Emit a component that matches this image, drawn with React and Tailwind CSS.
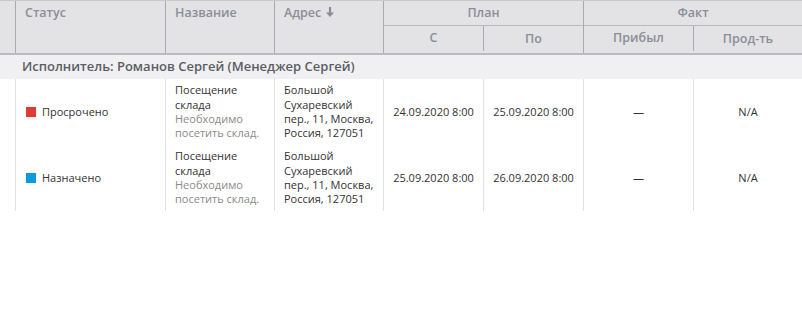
const rows = [
  {
    status: 'Просрочено',
    color: 'bg-[#e13b35]',
    from: '24.09.2020 8:00',
    to: '25.09.2020 8:00',
  },
  {
    status: 'Назначено',
    color: 'bg-[#0a9bd9]',
    from: '25.09.2020 8:00',
    to: '26.09.2020 8:00',
  },
];

function ArrowDown() {
  return (
    <svg width="10" height="12" viewBox="0 0 10 12" className="ml-1 mt-[2px]">
      <path d="M5 1v8" stroke="#8b8e96" strokeWidth="2.2" />
      <path d="M1 6.5 5 11l4-4.5z" fill="#8b8e96" />
    </svg>
  );
}

export default function App() {
  return (
    <div className="w-[802px] h-[333px] bg-white text-[11px] font-['Open_Sans','Noto_Sans',sans-serif]">
      {/* Шапка */}
      <div className="flex h-[55px] bg-[#e3e3e5] border-t border-[#c9c9cd] border-b-2 border-b-[#b9bbc0] text-[#8b8e97] text-[12.5px] font-semibold">
        <div className="w-[15px] shrink-0" />
        <div className="w-[150px] shrink-0 border-l border-[#a7abb3] pl-[9px] pt-[3px]">Статус</div>
        <div className="w-[109px] shrink-0 border-l border-[#a7abb3] pl-[9px] pt-[3px]">Название</div>
        <div className="w-[109px] shrink-0 border-l border-[#a7abb3] pl-[9px] pt-[3px] flex items-start">
          Адрес
          <ArrowDown />
        </div>
        <div className="w-[200px] shrink-0 border-l border-[#a7abb3] flex flex-col">
          <div className="h-[25px] flex items-center justify-center border-b border-[#b9bbc0]">План</div>
          <div className="flex flex-1">
            <div className="w-[100px] flex items-center justify-center border-r border-[#a7abb3] mb-[2px]">С</div>
            <div className="flex-1 flex items-center justify-center">По</div>
          </div>
        </div>
        <div className="flex-1 border-l border-[#a7abb3] flex flex-col">
          <div className="h-[25px] flex items-center justify-center border-b border-[#b9bbc0]">Факт</div>
          <div className="flex flex-1">
            <div className="w-[110px] flex items-center justify-center border-r border-[#a7abb3] mb-[2px]">Прибыл</div>
            <div className="flex-1 flex items-center justify-center">Прод-ть</div>
          </div>
        </div>
      </div>

      {/* Группа */}
      <div className="h-[24px] bg-[#f0f0f2] flex items-center pl-[22px] text-[13px] font-semibold text-[#5b5d63]">
        Исполнитель: Романов Сергей (Менеджер Сергей)
      </div>

      {/* Строки */}
      {rows.map((r) => (
        <div key={r.status} className="flex h-[66px] text-[#333]">
          <div className="w-[15px] shrink-0" />
          <div className="w-[150px] shrink-0 border-l border-[#e2e2e2] flex items-center pl-[10px]">
            <span className={`w-[10px] h-[10px] mr-[6px] ${r.color}`} />
            {r.status}
          </div>
          <div className="w-[109px] shrink-0 border-l border-[#e2e2e2] flex flex-col justify-center pl-[9px] leading-[14.3px]">
            <div>Посещение</div>
            <div>склада</div>
            <div className="text-[#8a8a8a]">Необходимо</div>
            <div className="text-[#8a8a8a]">посетить склад.</div>
          </div>
          <div className="w-[109px] shrink-0 border-l border-[#e2e2e2] flex flex-col justify-center pl-[9px] leading-[14.3px]">
            <div>Большой</div>
            <div>Сухаревский</div>
            <div>пер., 11, Москва,</div>
            <div>Россия, 127051</div>
          </div>
          <div className="w-[100px] shrink-0 border-l border-[#e2e2e2] flex items-center justify-center">{r.from}</div>
          <div className="w-[100px] shrink-0 border-l border-[#e2e2e2] flex items-center justify-center">{r.to}</div>
          <div className="w-[110px] shrink-0 border-l border-[#e2e2e2] flex items-center justify-center">—</div>
          <div className="flex-1 border-l border-[#e2e2e2] flex items-center justify-center">N/A</div>
        </div>
      ))}
    </div>
  );
}
